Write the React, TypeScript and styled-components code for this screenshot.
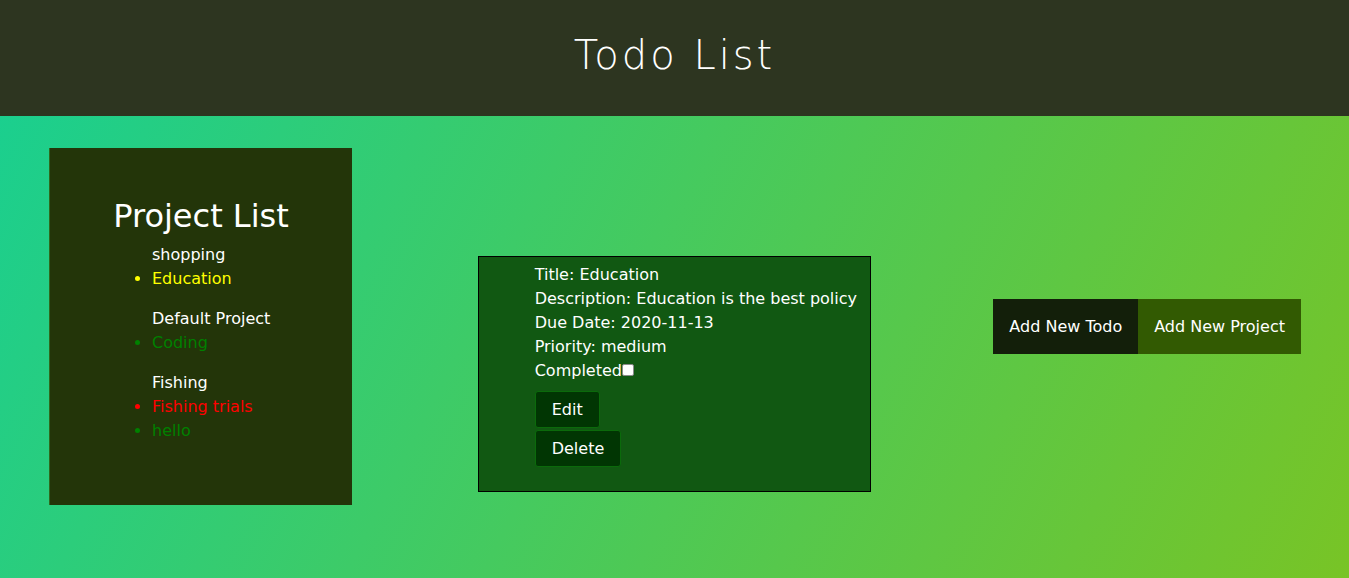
import React from "react";
import styled, { createGlobalStyle } from "styled-components";

const Global = createGlobalStyle`
  html, body { margin: 0; padding: 0; }
  body {
    font-family: "DejaVu Sans", sans-serif;
    font-size: 16px;
    color: #ffffff;
  }
  * { box-sizing: border-box; }
`;

const Page = styled.div`
  min-height: 578px;
  display: flex;
  flex-direction: column;
`;

const Header = styled.header`
  height: 116px;
  background: #2d3520;
  display: flex;
  align-items: center;
  justify-content: center;
`;

const Title = styled.h1`
  margin: 0 0 6px 0;
  font-family: "DejaVu Sans", sans-serif;
  font-weight: 200;
  font-size: 40px;
  letter-spacing: 3px;
  color: #ffffff;
`;

const Main = styled.main`
  flex: 1;
  background: linear-gradient(117deg, #1bcf8e 0%, #78c426 100%);
  display: flex;
  align-items: flex-start;
  justify-content: space-between;
  padding: 32px 48px 0 49px;
`;

const Panel = styled.section`
  width: 303px;
  height: 357px;
  background: #233509;
  border-left: 1px solid #2e6a1e;
  padding-top: 48px;
`;

const PanelTitle = styled.h2`
  margin: 0;
  text-align: center;
  font-weight: normal;
  font-size: 32px;
  line-height: 40px;
`;

const Groups = styled.div`
  padding-left: 102px;
  margin-top: 7px;
`;

const Group = styled.div`
  margin-bottom: 16px;
`;

const GroupName = styled.div`
  line-height: 24px;
  color: #ffffff;
`;

const Items = styled.ul`
  margin: 0;
  padding-left: 0;
  list-style: disc;
  list-style-position: outside;
`;

const Item = styled.li<{ $color: string }>`
  line-height: 24px;
  color: ${(p) => p.$color};
  &::marker { color: ${(p) => p.$color}; }
`;

const Card = styled.section`
  width: 393px;
  margin-top: 108px;
  margin-left: 3px;
  background: #115812;
  border: 1px solid #000000;
  padding: 6px 8px 24px 56px;
`;

const Field = styled.div`
  line-height: 24px;
  display: flex;
  align-items: center;
  white-space: nowrap;
`;

const Check = styled.input`
  appearance: none;
  width: 12px;
  height: 12px;
  margin: 0 0 2px 0;
  background: #ffffff;
  border: 1px solid #8a8a8a;
  border-radius: 2px;
`;

const Actions = styled.div`
  display: flex;
  flex-direction: column;
  align-items: flex-start;
  gap: 2px;
  margin-top: 8px;
`;

const SmallButton = styled.button`
  font-family: inherit;
  font-size: 16px;
  line-height: 19px;
  color: #ffffff;
  background: #013603;
  border: 1px solid #0b6a0b;
  border-radius: 3px;
  padding: 8px 16px;
`;

const ButtonBar = styled.div`
  display: flex;
  margin-top: 151px;
`;

const BigButton = styled.button<{ $bg: string }>`
  font-family: inherit;
  font-size: 16px;
  line-height: 19px;
  color: #ffffff;
  background: ${(p) => p.$bg};
  border: none;
  padding: 18px 16px;
`;

const projects = [
  { name: "shopping", items: [{ t: "Education", c: "#ffff00" }] },
  { name: "Default Project", items: [{ t: "Coding", c: "#008000" }] },
  {
    name: "Fishing",
    items: [
      { t: "Fishing trials", c: "#ff0000" },
      { t: "hello", c: "#008000" },
    ],
  },
];

export default function App() {
  return (
    <Page>
      <Global />
      <Header>
        <Title>Todo List</Title>
      </Header>
      <Main>
        <Panel>
          <PanelTitle>Project List</PanelTitle>
          <Groups>
            {projects.map((p) => (
              <Group key={p.name}>
                <GroupName>{p.name}</GroupName>
                <Items>
                  {p.items.map((i) => (
                    <Item key={i.t} $color={i.c}>
                      {i.t}
                    </Item>
                  ))}
                </Items>
              </Group>
            ))}
          </Groups>
        </Panel>
        <Card>
          <Field>Title: Education</Field>
          <Field>Description: Education is the best policy</Field>
          <Field>Due Date: 2020-11-13</Field>
          <Field>Priority: medium</Field>
          <Field>
            Completed
            <Check type="checkbox" />
          </Field>
          <Actions>
            <SmallButton>Edit</SmallButton>
            <SmallButton>Delete</SmallButton>
          </Actions>
        </Card>
        <ButtonBar>
          <BigButton $bg="#131f0a">Add New Todo</BigButton>
          <BigButton $bg="#325a02">Add New Project</BigButton>
        </ButtonBar>
      </Main>
    </Page>
  );
}
